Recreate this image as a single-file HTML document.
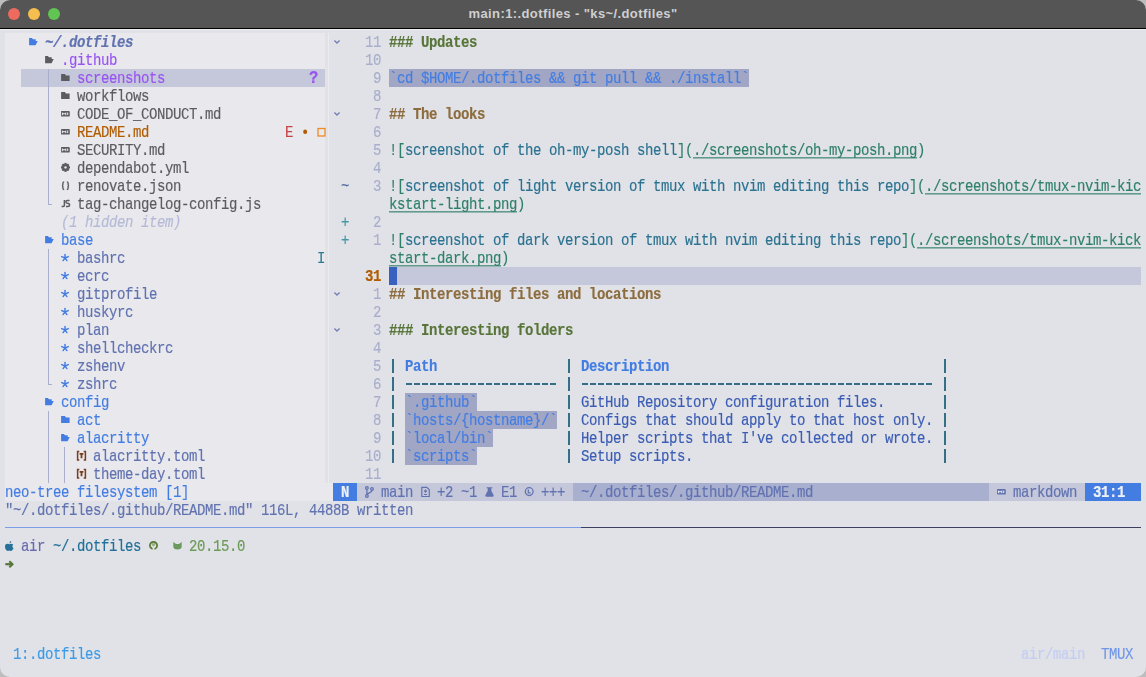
<!DOCTYPE html><html><head><meta charset="utf-8"><style>
html,body{margin:0;padding:0;}
body{width:1146px;height:677px;overflow:hidden;position:relative;background:#bdbdbd;}
#win{position:absolute;left:0;top:0;width:1146px;height:677px;border-radius:10px;overflow:hidden;background:#e1e2e7;}
.t{position:absolute;white-space:pre;font-family:"Liberation Mono",monospace;font-size:14px;letter-spacing:-0.4014px;line-height:18px;height:18px;transform:scaleY(1.14);transform-origin:0 13px;will-change:transform;-webkit-text-stroke:0.15px currentColor;}
.b{position:absolute;}
.i{position:absolute;overflow:visible;}
#title{position:absolute;left:0;top:0;width:1146px;height:28px;background:#555555;}
#title .tt{position:absolute;left:0;right:0;top:0;line-height:28px;text-align:center;font-family:"Liberation Sans",sans-serif;font-weight:bold;font-size:13px;letter-spacing:0.4px;color:#cfcfcf;}
</style></head><body><div id="win">
<div id="title"><div class="tt">main:1:.dotfiles - "ks~/.dotfiles"</div>
<div style="position:absolute;left:8px;top:8px;width:12px;height:12px;border-radius:6px;background:#ed6a5e"></div>
<div style="position:absolute;left:28px;top:8px;width:12px;height:12px;border-radius:6px;background:#f5bf4f"></div>
<div style="position:absolute;left:48px;top:8px;width:12px;height:12px;border-radius:6px;background:#61c554"></div>
</div>
<div style="position:absolute;left:0;top:28px;width:1146px;height:1px;background:#000"></div>
<div style="position:absolute;left:0;top:29px;width:1146px;height:1px;background:#eeeef1"></div>
<div class="b" style="left:5px;top:33px;width:320px;height:450px;background:#e9e9ed;"></div>
<div class="b" style="left:328px;top:33px;width:1px;height:450px;background:#ececf0;"></div>
<svg class="i" style="left:29px;top:33px" width="10" height="18" viewBox="0 0 10 18"><path d="M0.1 5H2.9L4 6.2H6.7V7.9H8.7L6.6 12.3H0.1Z" fill="#437de2"/></svg>
<div class="t" style="left:45px;top:34px;color:#6172b0;font-weight:bold;font-style:italic;">~/.dotfiles</div>
<svg class="i" style="left:45px;top:51px" width="10" height="18" viewBox="0 0 10 18"><path d="M0.1 5H2.9L4 6.2H6.7V7.9H8.7L6.6 12.3H0.1Z" fill="#5c5c60"/></svg>
<div class="t" style="left:61px;top:52px;color:#9854f1;">.github</div>
<div class="b" style="left:21px;top:69px;width:304px;height:18px;background:#c4c8da;"></div>
<div class="b" style="left:48px;top:69px;width:1px;height:18px;background:#a8aecb;"></div>
<div class="b" style="left:48px;top:87px;width:1px;height:18px;background:#a8aecb;"></div>
<div class="b" style="left:48px;top:105px;width:1px;height:18px;background:#a8aecb;"></div>
<div class="b" style="left:48px;top:123px;width:1px;height:18px;background:#a8aecb;"></div>
<div class="b" style="left:48px;top:141px;width:1px;height:18px;background:#a8aecb;"></div>
<div class="b" style="left:48px;top:159px;width:1px;height:18px;background:#a8aecb;"></div>
<div class="b" style="left:48px;top:177px;width:1px;height:18px;background:#a8aecb;"></div>
<div class="b" style="left:48px;top:195px;width:1px;height:9px;background:#a8aecb;"></div>
<div class="b" style="left:48px;top:204px;width:4px;height:1px;background:#a8aecb;"></div>
<svg class="i" style="left:61px;top:69px" width="10" height="18" viewBox="0 0 10 18"><path d="M0.1 5H3.9L5 6.4H8.6V12H0.1Z" fill="#5c5c60"/></svg>
<div class="t" style="left:77px;top:70px;color:#9854f1;">screenshots</div>
<div class="t" style="left:309px;top:70px;color:#9854f1;font-weight:bold;font-size:15.5px;letter-spacing:0;margin-left:-0.5px;">?</div>
<svg class="i" style="left:61px;top:87px" width="10" height="18" viewBox="0 0 10 18"><path d="M0.1 5H3.9L5 6.4H8.6V12H0.1Z" fill="#5c5c60"/></svg>
<div class="t" style="left:77px;top:88px;color:#5c5c60;">workflows</div>
<svg class="i" style="left:61px;top:105px" width="10" height="18" viewBox="0 0 10 18"><path d="M0.1 5.9H7.6Q8.8 5.9 8.8 7.1V10.4Q8.8 11.6 7.6 11.6H0.1Z" fill="#5c5c60"/><path d="M1.6 10.2V7.6M1.6 8.7H4.8M4.8 10.2V7.6M6.7 7.5V10" stroke="#e9e9ed" stroke-width="1" fill="none"/></svg>
<div class="t" style="left:77px;top:106px;color:#5c5c60;">CODE_OF_CONDUCT.md</div>
<svg class="i" style="left:61px;top:123px" width="10" height="18" viewBox="0 0 10 18"><path d="M0.1 5.9H7.6Q8.8 5.9 8.8 7.1V10.4Q8.8 11.6 7.6 11.6H0.1Z" fill="#5c5c60"/><path d="M1.6 10.2V7.6M1.6 8.7H4.8M4.8 10.2V7.6M6.7 7.5V10" stroke="#e9e9ed" stroke-width="1" fill="none"/></svg>
<div class="t" style="left:77px;top:124px;color:#b15c00;">README.md</div>
<div class="t" style="left:285px;top:124px;color:#c64343;">E</div>
<div class="t" style="left:301px;top:124px;color:#b15c00;">•</div>
<svg class="i" style="left:317px;top:123px" width="8" height="18" viewBox="0 0 8 18"><rect x="1" y="5.5" width="7" height="7.5" stroke="#f08a24" stroke-width="1.3" fill="none"/></svg>
<svg class="i" style="left:61px;top:141px" width="10" height="18" viewBox="0 0 10 18"><path d="M0.1 5.9H7.6Q8.8 5.9 8.8 7.1V10.4Q8.8 11.6 7.6 11.6H0.1Z" fill="#5c5c60"/><path d="M1.6 10.2V7.6M1.6 8.7H4.8M4.8 10.2V7.6M6.7 7.5V10" stroke="#e9e9ed" stroke-width="1" fill="none"/></svg>
<div class="t" style="left:77px;top:142px;color:#5c5c60;">SECURITY.md</div>
<svg class="i" style="left:61px;top:159px" width="10" height="18" viewBox="0 0 10 18"><g transform="translate(4.5 8.4)"><circle r="3.4" fill="#5c5c60"/><rect x="-1.1" y="-4.5" width="2.2" height="2" fill="#5c5c60" transform="rotate(0)"/><rect x="-1.1" y="-4.5" width="2.2" height="2" fill="#5c5c60" transform="rotate(45)"/><rect x="-1.1" y="-4.5" width="2.2" height="2" fill="#5c5c60" transform="rotate(90)"/><rect x="-1.1" y="-4.5" width="2.2" height="2" fill="#5c5c60" transform="rotate(135)"/><rect x="-1.1" y="-4.5" width="2.2" height="2" fill="#5c5c60" transform="rotate(180)"/><rect x="-1.1" y="-4.5" width="2.2" height="2" fill="#5c5c60" transform="rotate(225)"/><rect x="-1.1" y="-4.5" width="2.2" height="2" fill="#5c5c60" transform="rotate(270)"/><rect x="-1.1" y="-4.5" width="2.2" height="2" fill="#5c5c60" transform="rotate(315)"/><circle r="1.2" fill="#e9e9ed"/></g></svg>
<div class="t" style="left:77px;top:160px;color:#5c5c60;">dependabot.yml</div>
<svg class="i" style="left:61px;top:177px" width="10" height="18" viewBox="0 0 10 18"><g stroke="#5c5c60" stroke-width="1.4" fill="none"><path d="M3.2 4.9Q1.9 4.9 1.9 6.2V7.6Q1.9 8.7 0.9 8.7Q1.9 8.7 1.9 9.8V11.2Q1.9 12.5 3.2 12.5"/><path d="M5.8 4.9Q7.1 4.9 7.1 6.2V7.6Q7.1 8.7 8.1 8.7Q7.1 8.7 7.1 9.8V11.2Q7.1 12.5 5.8 12.5"/></g></svg>
<div class="t" style="left:77px;top:178px;color:#5c5c60;">renovate.json</div>
<svg class="i" style="left:61px;top:195px" width="10" height="18" viewBox="0 0 10 18"><g stroke="#5c5c60" stroke-width="1.5" fill="none"><path d="M3.4 5V10.2Q3.4 11.4 2.2 11.4H0.6"/><path d="M8.6 5.4H6.2Q4.9 5.4 4.9 6.8Q4.9 8 6.4 8.2Q8.6 8.4 8.6 9.9Q8.6 11.4 6.8 11.4H4.9"/></g></svg>
<div class="t" style="left:77px;top:196px;color:#5c5c60;">tag-changelog-config.js</div>
<div class="t" style="left:61px;top:214px;color:#b4bad6;font-style:italic;">(1 hidden item)</div>
<svg class="i" style="left:45px;top:231px" width="10" height="18" viewBox="0 0 10 18"><path d="M0.1 5H2.9L4 6.2H6.7V7.9H8.7L6.6 12.3H0.1Z" fill="#437de2"/></svg>
<div class="t" style="left:61px;top:232px;color:#437de2;">base</div>
<div class="b" style="left:48px;top:249px;width:1px;height:18px;background:#a8aecb;"></div>
<svg class="i" style="left:61px;top:249px" width="9" height="18" viewBox="0 0 9 18"><g stroke="#437de2" stroke-width="1.45" stroke-linecap="round" fill="none"><path d="M4 9V5.4"/><path d="M4 9L0.7 7.6"/><path d="M4 9L7.3 7.6"/><path d="M4 9L2.1 11.6"/><path d="M4 9L5.9 11.6"/></g></svg>
<div class="t" style="left:77px;top:250px;color:#6172b0;">bashrc</div>
<div class="b" style="left:48px;top:267px;width:1px;height:18px;background:#a8aecb;"></div>
<svg class="i" style="left:61px;top:267px" width="9" height="18" viewBox="0 0 9 18"><g stroke="#437de2" stroke-width="1.45" stroke-linecap="round" fill="none"><path d="M4 9V5.4"/><path d="M4 9L0.7 7.6"/><path d="M4 9L7.3 7.6"/><path d="M4 9L2.1 11.6"/><path d="M4 9L5.9 11.6"/></g></svg>
<div class="t" style="left:77px;top:268px;color:#6172b0;">ecrc</div>
<div class="b" style="left:48px;top:285px;width:1px;height:18px;background:#a8aecb;"></div>
<svg class="i" style="left:61px;top:285px" width="9" height="18" viewBox="0 0 9 18"><g stroke="#437de2" stroke-width="1.45" stroke-linecap="round" fill="none"><path d="M4 9V5.4"/><path d="M4 9L0.7 7.6"/><path d="M4 9L7.3 7.6"/><path d="M4 9L2.1 11.6"/><path d="M4 9L5.9 11.6"/></g></svg>
<div class="t" style="left:77px;top:286px;color:#6172b0;">gitprofile</div>
<div class="b" style="left:48px;top:303px;width:1px;height:18px;background:#a8aecb;"></div>
<svg class="i" style="left:61px;top:303px" width="9" height="18" viewBox="0 0 9 18"><g stroke="#437de2" stroke-width="1.45" stroke-linecap="round" fill="none"><path d="M4 9V5.4"/><path d="M4 9L0.7 7.6"/><path d="M4 9L7.3 7.6"/><path d="M4 9L2.1 11.6"/><path d="M4 9L5.9 11.6"/></g></svg>
<div class="t" style="left:77px;top:304px;color:#6172b0;">huskyrc</div>
<div class="b" style="left:48px;top:321px;width:1px;height:18px;background:#a8aecb;"></div>
<svg class="i" style="left:61px;top:321px" width="9" height="18" viewBox="0 0 9 18"><g stroke="#437de2" stroke-width="1.45" stroke-linecap="round" fill="none"><path d="M4 9V5.4"/><path d="M4 9L0.7 7.6"/><path d="M4 9L7.3 7.6"/><path d="M4 9L2.1 11.6"/><path d="M4 9L5.9 11.6"/></g></svg>
<div class="t" style="left:77px;top:322px;color:#6172b0;">plan</div>
<div class="b" style="left:48px;top:339px;width:1px;height:18px;background:#a8aecb;"></div>
<svg class="i" style="left:61px;top:339px" width="9" height="18" viewBox="0 0 9 18"><g stroke="#437de2" stroke-width="1.45" stroke-linecap="round" fill="none"><path d="M4 9V5.4"/><path d="M4 9L0.7 7.6"/><path d="M4 9L7.3 7.6"/><path d="M4 9L2.1 11.6"/><path d="M4 9L5.9 11.6"/></g></svg>
<div class="t" style="left:77px;top:340px;color:#6172b0;">shellcheckrc</div>
<div class="b" style="left:48px;top:357px;width:1px;height:18px;background:#a8aecb;"></div>
<svg class="i" style="left:61px;top:357px" width="9" height="18" viewBox="0 0 9 18"><g stroke="#437de2" stroke-width="1.45" stroke-linecap="round" fill="none"><path d="M4 9V5.4"/><path d="M4 9L0.7 7.6"/><path d="M4 9L7.3 7.6"/><path d="M4 9L2.1 11.6"/><path d="M4 9L5.9 11.6"/></g></svg>
<div class="t" style="left:77px;top:358px;color:#6172b0;">zshenv</div>
<div class="b" style="left:48px;top:375px;width:1px;height:9px;background:#a8aecb;"></div>
<div class="b" style="left:48px;top:384px;width:4px;height:1px;background:#a8aecb;"></div>
<svg class="i" style="left:61px;top:375px" width="9" height="18" viewBox="0 0 9 18"><g stroke="#437de2" stroke-width="1.45" stroke-linecap="round" fill="none"><path d="M4 9V5.4"/><path d="M4 9L0.7 7.6"/><path d="M4 9L7.3 7.6"/><path d="M4 9L2.1 11.6"/><path d="M4 9L5.9 11.6"/></g></svg>
<div class="t" style="left:77px;top:376px;color:#6172b0;">zshrc</div>
<div class="t" style="left:317px;top:250px;color:#2a7c90;">I</div>
<svg class="i" style="left:45px;top:393px" width="10" height="18" viewBox="0 0 10 18"><path d="M0.1 5H2.9L4 6.2H6.7V7.9H8.7L6.6 12.3H0.1Z" fill="#437de2"/></svg>
<div class="t" style="left:61px;top:394px;color:#437de2;">config</div>
<div class="b" style="left:48px;top:411px;width:1px;height:18px;background:#a8aecb;"></div>
<div class="b" style="left:48px;top:429px;width:1px;height:18px;background:#a8aecb;"></div>
<div class="b" style="left:48px;top:447px;width:1px;height:18px;background:#a8aecb;"></div>
<div class="b" style="left:48px;top:465px;width:1px;height:18px;background:#a8aecb;"></div>
<svg class="i" style="left:61px;top:411px" width="10" height="18" viewBox="0 0 10 18"><path d="M0.1 5H3.9L5 6.4H8.6V12H0.1Z" fill="#437de2"/></svg>
<div class="t" style="left:77px;top:412px;color:#437de2;">act</div>
<svg class="i" style="left:61px;top:429px" width="10" height="18" viewBox="0 0 10 18"><path d="M0.1 5H2.9L4 6.2H6.7V7.9H8.7L6.6 12.3H0.1Z" fill="#437de2"/></svg>
<div class="t" style="left:77px;top:430px;color:#437de2;">alacritty</div>
<div class="b" style="left:64px;top:447px;width:1px;height:18px;background:#a8aecb;"></div>
<div class="b" style="left:64px;top:465px;width:1px;height:18px;background:#a8aecb;"></div>
<svg class="i" style="left:77px;top:447px" width="10" height="18" viewBox="0 0 10 18"><path d="M2.3 4.6H0.6V13H2.3M6.7 4.6H8.4V13H6.7" stroke="#7a3c1c" stroke-width="1.5" fill="none"/><path d="M2.6 6.9H6.4M4.5 6.9V11.3" stroke="#7a3c1c" stroke-width="1.8" fill="none"/></svg>
<div class="t" style="left:93px;top:448px;color:#6172b0;">alacritty.toml</div>
<svg class="i" style="left:77px;top:465px" width="10" height="18" viewBox="0 0 10 18"><path d="M2.3 4.6H0.6V13H2.3M6.7 4.6H8.4V13H6.7" stroke="#7a3c1c" stroke-width="1.5" fill="none"/><path d="M2.6 6.9H6.4M4.5 6.9V11.3" stroke="#7a3c1c" stroke-width="1.8" fill="none"/></svg>
<div class="t" style="left:93px;top:466px;color:#6172b0;">theme-day.toml</div>
<div class="t" style="left:365px;top:34px;color:#a8aecb;">11</div>
<div class="t" style="left:365px;top:52px;color:#a8aecb;">10</div>
<div class="t" style="left:373px;top:70px;color:#a8aecb;">9</div>
<div class="t" style="left:373px;top:88px;color:#a8aecb;">8</div>
<div class="t" style="left:373px;top:106px;color:#a8aecb;">7</div>
<div class="t" style="left:373px;top:124px;color:#a8aecb;">6</div>
<div class="t" style="left:373px;top:142px;color:#a8aecb;">5</div>
<div class="t" style="left:373px;top:160px;color:#a8aecb;">4</div>
<div class="t" style="left:373px;top:178px;color:#a8aecb;">3</div>
<div class="t" style="left:373px;top:214px;color:#a8aecb;">2</div>
<div class="t" style="left:373px;top:232px;color:#a8aecb;">1</div>
<div class="t" style="left:373px;top:286px;color:#a8aecb;">1</div>
<div class="t" style="left:373px;top:304px;color:#a8aecb;">2</div>
<div class="t" style="left:373px;top:322px;color:#a8aecb;">3</div>
<div class="t" style="left:373px;top:340px;color:#a8aecb;">4</div>
<div class="t" style="left:373px;top:358px;color:#a8aecb;">5</div>
<div class="t" style="left:373px;top:376px;color:#a8aecb;">6</div>
<div class="t" style="left:373px;top:394px;color:#a8aecb;">7</div>
<div class="t" style="left:373px;top:412px;color:#a8aecb;">8</div>
<div class="t" style="left:373px;top:430px;color:#a8aecb;">9</div>
<div class="t" style="left:365px;top:448px;color:#a8aecb;">10</div>
<div class="t" style="left:365px;top:466px;color:#a8aecb;">11</div>
<div class="t" style="left:365px;top:268px;color:#b15c00;font-weight:bold;">31</div>
<svg class="i" style="left:333px;top:33px" width="8" height="18" viewBox="0 0 8 18"><path d="M1.4 7.6L4 10.1L6.6 7.6" stroke="#7680b8" stroke-width="1.4" fill="none"/></svg>
<svg class="i" style="left:333px;top:105px" width="8" height="18" viewBox="0 0 8 18"><path d="M1.4 7.6L4 10.1L6.6 7.6" stroke="#7680b8" stroke-width="1.4" fill="none"/></svg>
<svg class="i" style="left:333px;top:285px" width="8" height="18" viewBox="0 0 8 18"><path d="M1.4 7.6L4 10.1L6.6 7.6" stroke="#7680b8" stroke-width="1.4" fill="none"/></svg>
<svg class="i" style="left:333px;top:321px" width="8" height="18" viewBox="0 0 8 18"><path d="M1.4 7.6L4 10.1L6.6 7.6" stroke="#7680b8" stroke-width="1.4" fill="none"/></svg>
<div class="t" style="left:389px;top:34px;color:#587539;font-weight:bold;">### Updates</div>
<div class="b" style="left:389px;top:69px;width:360px;height:18px;background:#a1a6c5;"></div>
<div class="t" style="left:389px;top:70px;color:#437de2;">`cd $HOME/.dotfiles &amp;&amp; git pull &amp;&amp; ./install`</div>
<div class="t" style="left:389px;top:106px;color:#8c6c3e;font-weight:bold;">## The looks</div>
<div class="t" style="left:389px;top:142px;color:#2f8069;">![</div>
<div class="t" style="left:405px;top:142px;color:#2a7290;">screenshot of the oh-my-posh shell</div>
<div class="t" style="left:677px;top:142px;color:#2f8069;">](</div>
<div class="t" style="left:693px;top:142px;color:#2f8069;text-decoration:underline;text-underline-offset:2px;text-decoration-skip-ink:none;">./screenshots/oh-my-posh.png</div>
<div class="t" style="left:917px;top:142px;color:#2f8069;">)</div>
<div class="t" style="left:341px;top:178px;color:#506d9c;">~</div>
<div class="t" style="left:389px;top:178px;color:#2f8069;">![</div>
<div class="t" style="left:405px;top:178px;color:#2a7290;">screenshot of light version of tmux with nvim editing this repo</div>
<div class="t" style="left:909px;top:178px;color:#2f8069;">](</div>
<div class="t" style="left:925px;top:178px;color:#2f8069;text-decoration:underline;text-underline-offset:2px;text-decoration-skip-ink:none;">./screenshots/tmux-nvim-kic</div>
<div class="t" style="left:389px;top:196px;color:#2f8069;text-decoration:underline;text-underline-offset:2px;text-decoration-skip-ink:none;">kstart-light.png</div>
<div class="t" style="left:517px;top:196px;color:#2f8069;">)</div>
<div class="t" style="left:341px;top:214px;color:#4197a4;">+</div>
<div class="t" style="left:341px;top:232px;color:#4197a4;">+</div>
<div class="t" style="left:389px;top:232px;color:#2f8069;">![</div>
<div class="t" style="left:405px;top:232px;color:#2a7290;">screenshot of dark version of tmux with nvim editing this repo</div>
<div class="t" style="left:901px;top:232px;color:#2f8069;">](</div>
<div class="t" style="left:917px;top:232px;color:#2f8069;text-decoration:underline;text-underline-offset:2px;text-decoration-skip-ink:none;">./screenshots/tmux-nvim-kick</div>
<div class="t" style="left:389px;top:250px;color:#2f8069;text-decoration:underline;text-underline-offset:2px;text-decoration-skip-ink:none;">start-dark.png</div>
<div class="t" style="left:501px;top:250px;color:#2f8069;">)</div>
<div class="b" style="left:389px;top:267px;width:752px;height:18px;background:#c4c8da;"></div>
<div class="b" style="left:389px;top:267px;width:8px;height:18px;background:#3760bf;"></div>
<div class="t" style="left:389px;top:286px;color:#8c6c3e;font-weight:bold;">## Interesting files and locations</div>
<div class="t" style="left:389px;top:322px;color:#587539;font-weight:bold;">### Interesting folders</div>
<div class="b" style="left:392.2px;top:359px;width:1.7px;height:13.5px;background:#356f86;"></div>
<div class="b" style="left:568.2px;top:359px;width:1.7px;height:13.5px;background:#356f86;"></div>
<div class="b" style="left:944.2px;top:359px;width:1.7px;height:13.5px;background:#356f86;"></div>
<div class="t" style="left:405px;top:358px;color:#437de2;font-weight:bold;">Path</div>
<div class="t" style="left:581px;top:358px;color:#437de2;font-weight:bold;">Description</div>
<div class="b" style="left:392.2px;top:377px;width:1.7px;height:13.5px;background:#356f86;"></div>
<div class="b" style="left:568.2px;top:377px;width:1.7px;height:13.5px;background:#356f86;"></div>
<div class="b" style="left:944.2px;top:377px;width:1.7px;height:13.5px;background:#356f86;"></div>
<div class="b" style="left:405px;top:383.4px;width:152px;height:1.5px;background:repeating-linear-gradient(90deg,transparent 0 1.4px,#356f86 1.4px 6.6px,transparent 6.6px 8px)"></div>
<div class="b" style="left:581px;top:383.4px;width:352px;height:1.5px;background:repeating-linear-gradient(90deg,transparent 0 1.4px,#356f86 1.4px 6.6px,transparent 6.6px 8px)"></div>
<div class="b" style="left:392.2px;top:395px;width:1.7px;height:13.5px;background:#356f86;"></div>
<div class="b" style="left:568.2px;top:395px;width:1.7px;height:13.5px;background:#356f86;"></div>
<div class="b" style="left:944.2px;top:395px;width:1.7px;height:13.5px;background:#356f86;"></div>
<div class="b" style="left:405px;top:393px;width:72px;height:18px;background:#a1a6c5;"></div>
<div class="t" style="left:405px;top:394px;color:#437de2;">`.github`</div>
<div class="t" style="left:581px;top:394px;color:#3a5cb4;">GitHub Repository configuration files.</div>
<div class="b" style="left:392.2px;top:413px;width:1.7px;height:13.5px;background:#356f86;"></div>
<div class="b" style="left:568.2px;top:413px;width:1.7px;height:13.5px;background:#356f86;"></div>
<div class="b" style="left:944.2px;top:413px;width:1.7px;height:13.5px;background:#356f86;"></div>
<div class="b" style="left:405px;top:411px;width:152px;height:18px;background:#a1a6c5;"></div>
<div class="t" style="left:405px;top:412px;color:#437de2;">`hosts/{hostname}/`</div>
<div class="t" style="left:581px;top:412px;color:#3a5cb4;">Configs that should apply to that host only.</div>
<div class="b" style="left:392.2px;top:431px;width:1.7px;height:13.5px;background:#356f86;"></div>
<div class="b" style="left:568.2px;top:431px;width:1.7px;height:13.5px;background:#356f86;"></div>
<div class="b" style="left:944.2px;top:431px;width:1.7px;height:13.5px;background:#356f86;"></div>
<div class="b" style="left:405px;top:429px;width:88px;height:18px;background:#a1a6c5;"></div>
<div class="t" style="left:405px;top:430px;color:#437de2;">`local/bin`</div>
<div class="t" style="left:581px;top:430px;color:#3a5cb4;">Helper scripts that I've collected or wrote.</div>
<div class="b" style="left:392.2px;top:449px;width:1.7px;height:13.5px;background:#356f86;"></div>
<div class="b" style="left:568.2px;top:449px;width:1.7px;height:13.5px;background:#356f86;"></div>
<div class="b" style="left:944.2px;top:449px;width:1.7px;height:13.5px;background:#356f86;"></div>
<div class="b" style="left:405px;top:447px;width:72px;height:18px;background:#a1a6c5;"></div>
<div class="t" style="left:405px;top:448px;color:#437de2;">`scripts`</div>
<div class="t" style="left:581px;top:448px;color:#3a5cb4;">Setup scripts.</div>
<div class="b" style="left:5px;top:483px;width:328px;height:18px;background:#e9e9ed;"></div>
<div class="t" style="left:5px;top:484px;color:#437de2;">neo-tree filesystem [1]</div>
<div class="b" style="left:333px;top:483px;width:24px;height:18px;background:#437de2;"></div>
<div class="t" style="left:341px;top:484px;color:#eef0f6;font-weight:bold;">N</div>
<div class="b" style="left:357px;top:483px;width:216px;height:18px;background:#c4c8da;"></div>
<svg class="i" style="left:365px;top:483px" width="9" height="18" viewBox="0 0 9 18"><g stroke="#6172b0" stroke-width="1.3" fill="none"><circle cx="1.9" cy="5" r="1.3"/><circle cx="1.9" cy="13" r="1.3"/><circle cx="7" cy="6" r="1.3"/><path d="M1.9 6.3V11.7"/><path d="M7 7.3C7 10 2.3 9.6 2.1 11.7"/></g></svg>
<div class="t" style="left:381px;top:484px;color:#6172b0;">main</div>
<svg class="i" style="left:421px;top:483px" width="9" height="18" viewBox="0 0 9 18"><g stroke="#6172b0" stroke-width="1.2" fill="none"><path d="M0.8 4.3H5.8L8.3 6.8V13.5H0.8Z"/><path d="M4.5 6.6V9.8M2.9 8.2H6.1M2.9 11.5H6.1"/></g></svg>
<div class="t" style="left:437px;top:484px;color:#6172b0;">+2</div>
<div class="t" style="left:461px;top:484px;color:#6172b0;">~1</div>
<svg class="i" style="left:485px;top:483px" width="9" height="18" viewBox="0 0 9 18"><path d="M1.6 4.2H7.4V5.3H6.3V7.8L8.7 12.3Q9 13.7 7.6 13.7H1.3Q0 13.7 0.3 12.3L2.7 7.8V5.3H1.6Z" fill="#6172b0"/></svg>
<div class="t" style="left:501px;top:484px;color:#6172b0;">E1</div>
<svg class="i" style="left:525px;top:483px" width="9" height="18" viewBox="0 0 9 18"><g stroke="#6172b0" stroke-width="1.3" fill="none"><circle cx="4.2" cy="8.6" r="3.9"/><path d="M3.3 6.6V9.8H5.6"/></g></svg>
<div class="t" style="left:541px;top:484px;color:#6172b0;">+++</div>
<div class="b" style="left:573px;top:483px;width:416px;height:18px;background:#a9afcf;"></div>
<div class="t" style="left:581px;top:484px;color:#6172b0;">~/.dotfiles/.github/README.md</div>
<div class="b" style="left:989px;top:483px;width:96px;height:18px;background:#c4c8da;"></div>
<svg class="i" style="left:997px;top:483px" width="10" height="18" viewBox="0 0 10 18"><path d="M0.1 5.9H7.6Q8.8 5.9 8.8 7.1V10.4Q8.8 11.6 7.6 11.6H0.1Z" fill="#6172b0"/><path d="M1.6 10.2V7.6M1.6 8.7H4.8M4.8 10.2V7.6M6.7 7.5V10" stroke="#e9e9ed" stroke-width="1" fill="none"/></svg>
<div class="t" style="left:1013px;top:484px;color:#6172b0;">markdown</div>
<div class="b" style="left:1085px;top:483px;width:56px;height:18px;background:#437de2;"></div>
<div class="t" style="left:1093px;top:484px;color:#eef0f6;font-weight:bold;">31:1</div>
<div class="t" style="left:5px;top:502px;color:#6172b0;">"~/.dotfiles/.github/README.md" 116L, 4488B written</div>
<div class="b" style="left:5px;top:527px;width:576px;height:1px;background:#7b9ee8;"></div>
<div class="b" style="left:581px;top:527px;width:560px;height:1px;background:#3b4060;"></div>
<svg class="i" style="left:5px;top:537px" width="9" height="18" viewBox="0 0 9 18"><path d="M4.3 6.5Q4.4 4.5 6.4 3.8Q6.3 5.9 4.3 6.5Z" fill="#27709a"/><path d="M4.25 7.3C3.3 6.5 0 6.1 0 9.7C0 12 1.6 13.9 2.8 13.9C3.5 13.9 3.8 13.6 4.25 13.6C4.7 13.6 5 13.9 5.7 13.9C6.9 13.9 8.2 12.3 8.5 11.2C7.2 10.6 7.1 8.4 8.2 7.6C7.3 6.4 5.4 6.5 4.25 7.3Z" fill="#27709a"/></svg>
<div class="t" style="left:21px;top:538px;color:#6a6aac;">air</div>
<div class="t" style="left:53px;top:538px;color:#22709a;">~/.dotfiles</div>
<svg class="i" style="left:149px;top:537px" width="9" height="18" viewBox="0 0 9 18"><circle cx="4.5" cy="8.4" r="3.6" stroke="#557a30" stroke-width="1.7" fill="none"/><rect x="3.6" y="10" width="1.8" height="3" fill="#e1e2e7"/><path d="M2.6 6.6L2.9 5.6L3.9 6.2H5.1L6.1 5.6L6.4 6.6Q6.9 8.8 4.5 9.4Q2.1 8.8 2.6 6.6Z" fill="#557a30" opacity="0.5"/></svg>
<svg class="i" style="left:173px;top:537px" width="9" height="18" viewBox="0 0 9 18"><path d="M0.3 5L3 7H6L8.7 5V9.4Q8.7 12.4 4.5 12.4Q0.3 12.4 0.3 9.4Z" fill="#6a9a5e"/></svg>
<div class="t" style="left:189px;top:538px;color:#6a9a55;">20.15.0</div>
<svg class="i" style="left:5px;top:555px" width="9" height="18" viewBox="0 0 9 18"><path d="M0.3 9.2H6.8" stroke="#587539" stroke-width="2.2" fill="none"/><path d="M4.3 6.2L7.6 9.2L4.3 12.2" stroke="#587539" stroke-width="2.1" fill="none" stroke-linejoin="round"/></svg>
<div class="t" style="left:13px;top:646px;color:#3d9be6;">1:.dotfiles</div>
<div class="t" style="left:1021px;top:646px;color:#c3cdf0;">air/main</div>
<div class="t" style="left:1101px;top:646px;color:#6f95e8;">TMUX</div></div></body></html>
